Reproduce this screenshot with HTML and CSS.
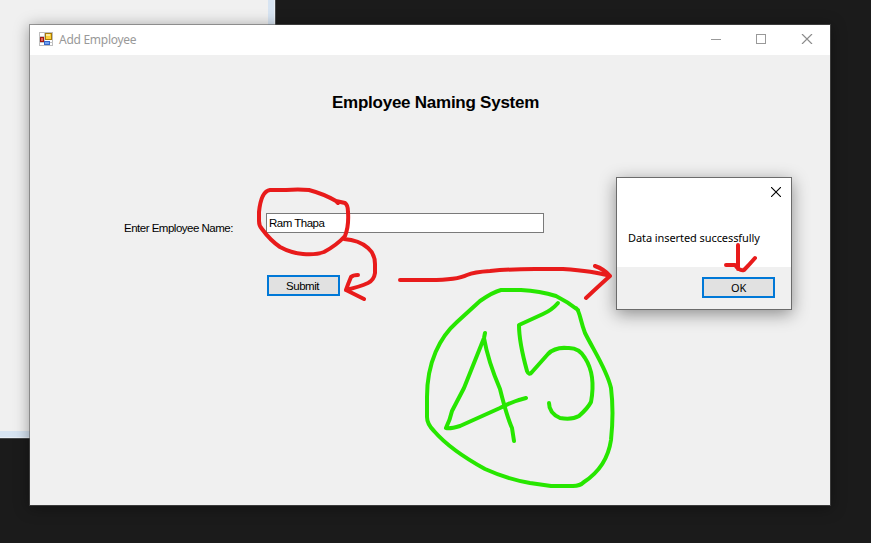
FILE: index.html
```html
<!DOCTYPE html>
<html lang="en">
<head>
<meta charset="utf-8">
<title>Add Employee</title>
<link rel="stylesheet" href="styles.css">
</head>
<body>
<div class="desktop">
  <div class="back-window"></div>

  <main class="window">
    <header class="titlebar">
      <svg class="app-icon" width="14" height="14" viewBox="0 0 14 14" shape-rendering="crispEdges">
        <rect x=".5" y=".5" width="13" height="13" fill="#fff" stroke="#bdbdbd"/>
        <path d="M5.500 0v14M0 4.500h6M0 10.500h14" stroke="#c4c4c4" fill="none"/>
        <rect x="1.500" y="5.500" width="3" height="4" fill="#e2685a" stroke="#a31510"/>
        <rect x="6.500" y="1.500" width="6" height="6" fill="#fbd03c" stroke="#a87b08"/>
        <rect x="7" y="2" width="4" height="2" fill="#fdea9c"/>
        <rect x="5.500" y="9.500" width="5" height="3" fill="#6fa0f2" stroke="#3567c8"/>
      </svg>
      <span class="caption">Add Employee</span>
      <svg class="controls" width="102" height="10" viewBox="0 0 102 10" fill="none" stroke="#999">
        <path d="M0 5.500h10"/>
        <rect x="45.500" y=".5" width="9" height="9"/>
        <path d="M91 0l10 10M101 0l-10 10" stroke="#8c8c8c" stroke-width="1.200"/>
      </svg>
    </header>
    <section class="form">
      <h1>Employee Naming System</h1>
      <div class="row">
        <label for="name">Enter Employee Name:</label>
        <input id="name" type="text" value="Ram Thapa">
      </div>
      <button class="submit">Submit</button>
    </section>
  </main>

  <div class="dialog">
    <div class="message">
      <svg class="close" width="10" height="10" viewBox="0 0 10 10"><path d="M0 0l10 10M10 0L0 10" stroke="#000" stroke-width="1.100"/></svg>
      <p>Data inserted successfully</p>
    </div>
    <div class="actions"><button class="ok">OK</button></div>
  </div>

  <svg class="ink" width="871" height="543" viewBox="0 0 871 543">
    <g class="red">
      <path d="M338 203L336 201Q324 194 309 190Q298 189 286 190H270C263 191 260 202 259 212V221Q259 226 262 229Q270 240 280 247Q291 253 303 254Q316 255 324 252Q337 245 345 236Q349 226 348 212Q348 205 345 203L336 201"/>
      <path d="M344 239Q359 240 368 248Q375 254 375 264V273Q374 280 368 283Q359 287 346 290M358 275Q353 275 351 277Q348 284 346 290Q354 294 364 299"/>
      <path d="M400 280H430Q457 280 467 275Q474 272 490 271Q510 269 535 269H563Q594 271 610 276M595 266Q604 269 610 276Q602 283 586 298"/>
      <path d="M738 245V269M726 265L735 265Q739 271 744 270Q749 265 755 258"/>
    </g>
    <g class="green">
      <path d="M578 310Q568 302 556 296Q540 291 521 290H501Q493 292 480 301L457 322C440 337 427 362 427 397V417Q427 424 434 431C447 446 465 458 485 469Q507 479 530 483L551 486H573Q580 486 584 482Q607 467 611 440Q614 412 611 388C607 370 594 351 585 333C580 320 580 311 576 308"/>
      <path d="M485 333L484 338Q476 358 464 388L452 411Q450 420 446 428Q450 429 460 426L500 408Q513 401 526 398M484 338Q488 361 500 389Q507 417 512 428L514 441"/>
      <path d="M558 303Q552 310 543 314L519 325Q519 342 527 371Q529 376 532 372L548 354Q555 347 567 348Q579 347 585 358Q596 375 591 402Q588 408 579 416Q572 420 560 418Q549 413 549 403"/>
    </g>
  </svg>
</div>
</body>
</html>
```

FILE: styles.css
```css
* { box-sizing: border-box; }
body { margin: 0; font-family: "Liberation Sans", Arial, sans-serif; color: #000; }
.desktop {
  position: relative;
  width: 871px;
  height: 543px;
  overflow: hidden;
  background: #1b1b1b;
}
.back-window {
  position: absolute;
  left: 0;
  top: 0;
  width: 276px;
  height: 439px;
  background: #f0f0f0;
  border: solid #45484b;
  border-width: 0 1px 1px 0;
  box-shadow: inset -1px -1px #e8eef5, inset -7px -7px #d7e4f2;
}
.window {
  position: absolute;
  left: 29px;
  top: 24px;
  width: 802px;
  height: 482px;
  display: flex;
  flex-direction: column;
  border: 1px solid rgba(91, 91, 91, .55);
  background: #f0f0f0;
  background-clip: padding-box;
  box-shadow: 0 2px 14px rgba(0, 0, 0, .36);
}
.titlebar {
  height: 30px;
  display: flex;
  align-items: center;
  padding: 0 17px 0 9px;
  background: #fff;
}
.app-icon { margin-bottom: 2px; }
.caption {
  margin-left: 6px;
  font: 12px/16px "Noto Sans", sans-serif;
  color: #999;
  letter-spacing: -.27px;
}
.controls { margin-left: auto; margin-bottom: 2px; }
.form {
  flex: 1;
  display: flex;
  flex-direction: column;
  align-items: flex-start;
}
h1 {
  margin: 38px 0 0 302px;
  font-size: 17px;
  line-height: 20px;
  letter-spacing: -.25px;
  white-space: nowrap;
}
.row {
  display: flex;
  margin: 100px 0 0 94px;
  height: 20px;
}
label {
  width: 142px;
  padding-top: 7px;
  font-size: 11.5px;
  line-height: 16px;
  letter-spacing: -.5px;
  white-space: nowrap;
}
input {
  width: 278px;
  height: 20px;
  padding: 0 2px;
  border: 1px solid #7a7a7a;
  background: #fff;
  font: 11.5px "Liberation Sans", Arial, sans-serif;
  letter-spacing: -.5px;
}
button {
  width: 73px;
  height: 21px;
  padding: 0;
  border: 2px solid #0078d7;
  background: #e1e1e1;
  color: #000;
  line-height: 17px;
}
.submit {
  margin: 42px 0 0 237px;
  padding: 1px 2px 0 0;
  font-family: "Liberation Sans", Arial, sans-serif;
  font-size: 11.5px;
  letter-spacing: -.5px;
}
.dialog {
  position: absolute;
  left: 616px;
  top: 177px;
  width: 176px;
  height: 133px;
  display: flex;
  flex-direction: column;
  border: 1px solid #6b6b6b;
  background: #f0f0f0;
  box-shadow: 0 4px 16px rgba(0, 0, 0, .42);
}
.message {
  height: 89px;
  display: flex;
  flex-direction: column;
  padding: 9px 10px 0 11px;
  background: #fff;
}
.close { align-self: flex-end; }
.message p {
  margin: 33px 0 0;
  font: 11px/16px "Noto Sans", sans-serif;
  letter-spacing: -.08px;
  white-space: nowrap;
}
.actions {
  display: flex;
  justify-content: flex-end;
  padding: 10px 16px 0 0;
}
.ok { font-family: "Noto Sans", sans-serif; font-size: 11px; letter-spacing: -.3px; }
.ink {
  position: absolute;
  left: 0;
  top: 0;
  fill: none;
  stroke-width: 4;
  stroke-linecap: round;
  stroke-linejoin: round;
  pointer-events: none;
}
.red { stroke: #e81b1b; }
.green { stroke: #27e600; }
```
